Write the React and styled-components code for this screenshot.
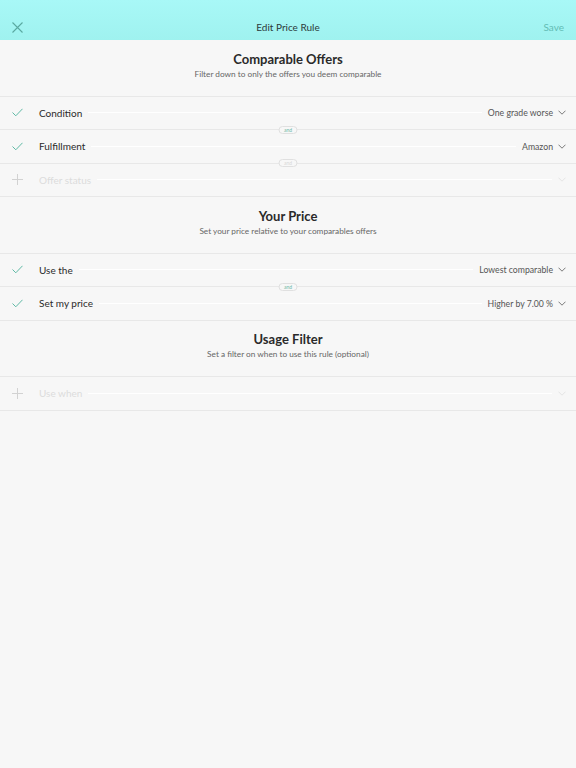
import React from 'react'
import styled, { createGlobalStyle } from 'styled-components'

const GlobalStyle = createGlobalStyle`
  html, body {
    margin: 0;
    padding: 0;
    background: #f7f7f7;
    font-family: Lato, "Open Sans", sans-serif;
  }
`

const Page = styled.div`
  width: 576px;
  min-height: 768px;
  background: #f7f7f7;
`

const TopBar = styled.header`
  height: 40px;
  box-sizing: border-box;
  padding: 14px 12px 0 12px;
  display: grid;
  grid-template-columns: 60px 1fr 60px;
  align-items: center;
  background: linear-gradient(to bottom, #a8f8f7, #9ff2ef);
`

const Title = styled.div`
  text-align: center;
  font-size: 10px;
  color: #2c3a3a;
`

const SaveButton = styled.button`
  justify-self: end;
  border: 0;
  padding: 0;
  background: none;
  font-family: inherit;
  font-size: 10px;
  color: #63bcb4;
`

const CloseButton = styled.button`
  justify-self: start;
  border: 0;
  padding: 0;
  background: none;
  display: flex;
`

const SectionHead = styled.div`
  height: 56.5px;
  box-sizing: border-box;
  border-bottom: 1px solid #e8e8e8;
  display: flex;
  flex-direction: column;
  align-items: center;
  justify-content: center;
  padding-bottom: 5px;
`

const SectionTitle = styled.h2`
  margin: 0;
  font-size: 13px;
  line-height: 16px;
  font-weight: 700;
  color: #2a2a2a;
`

const SectionSub = styled.p`
  margin: 1px 0 0;
  font-size: 8.25px;
  line-height: 12px;
  color: #666;
`

const Row = styled.div`
  position: relative;
  height: 33.5px;
  box-sizing: border-box;
  border-bottom: 1px solid #e8e8e8;
  display: flex;
  align-items: center;
  padding: 0 10px 0 12px;
  color: ${p => (p.disabled ? '#dcdcdc' : '#2a2a2a')};
`

const IconSlot = styled.span`
  width: 27px;
  display: flex;
  align-items: center;
`

const Label = styled.span`
  font-size: 10px;
`

const Rule = styled.span`
  flex: 1;
  height: 1px;
  margin: 0 6px;
  background: #ffffff;
`

const Value = styled.span`
  font-size: 8.7px;
  color: #555;
  margin-right: 5px;
`

const AndPill = styled.span`
  position: absolute;
  left: 50%;
  bottom: -4.5px;
  transform: translateX(-50%);
  z-index: 1;
  width: 19px;
  height: 8px;
  box-sizing: border-box;
  border: 1px solid #e0e0e0;
  border-radius: 5px;
  background: #f7f7f7;
  font-size: 5px;
  line-height: 6px;
  text-align: center;
  color: ${p => (p.muted ? '#d8d8d8' : '#6cb8a8')};
`

const Check = () => (
  <svg width="11" height="9" viewBox="0 0 11 9">
    <polyline points="0.5,4.5 3.8,7.8 10.5,0.8" fill="none" stroke="#5fb9a5" strokeWidth="1" />
  </svg>
)

const Plus = () => (
  <svg width="11" height="11" viewBox="0 0 11 11">
    <path d="M5.5 0V11M0 5.5H11" stroke="#d2d2d2" strokeWidth="1" />
  </svg>
)

const Chevron = ({ muted }) => (
  <svg width="8" height="5" viewBox="0 0 8 5">
    <polyline points="0.5,0.7 4,4.2 7.5,0.7" fill="none" stroke={muted ? '#e4e4e4' : '#7a7a7a'} strokeWidth="1" />
  </svg>
)

const Cross = () => (
  <svg width="11" height="11" viewBox="0 0 11 11">
    <path d="M0.5 0.5L10.5 10.5M10.5 0.5L0.5 10.5" stroke="#5aa9a1" strokeWidth="1.1" />
  </svg>
)

const RuleRow = ({ label, value, disabled, and, andMuted }) => (
  <Row disabled={disabled}>
    <IconSlot>{disabled ? <Plus /> : <Check />}</IconSlot>
    <Label>{label}</Label>
    <Rule />
    {value && <Value>{value}</Value>}
    <Chevron muted={disabled} />
    {and && <AndPill muted={andMuted}>and</AndPill>}
  </Row>
)

const Section = ({ title, sub, children }) => (
  <section>
    <SectionHead>
      <SectionTitle>{title}</SectionTitle>
      <SectionSub>{sub}</SectionSub>
    </SectionHead>
    {children}
  </section>
)

export default function App() {
  return (
    <Page>
      <GlobalStyle />
      <TopBar>
        <CloseButton><Cross /></CloseButton>
        <Title>Edit Price Rule</Title>
        <SaveButton>Save</SaveButton>
      </TopBar>

      <Section title="Comparable Offers" sub="Filter down to only the offers you deem comparable">
        <RuleRow label="Condition" value="One grade worse" and />
        <RuleRow label="Fulfillment" value="Amazon" and andMuted />
        <RuleRow label="Offer status" disabled />
      </Section>

      <Section title="Your Price" sub="Set your price relative to your comparables offers">
        <RuleRow label="Use the" value="Lowest comparable" and />
        <RuleRow label="Set my price" value="Higher by 7.00 %" />
      </Section>

      <Section title="Usage Filter" sub="Set a filter on when to use this rule (optional)">
        <RuleRow label="Use when" disabled />
      </Section>
    </Page>
  )
}
